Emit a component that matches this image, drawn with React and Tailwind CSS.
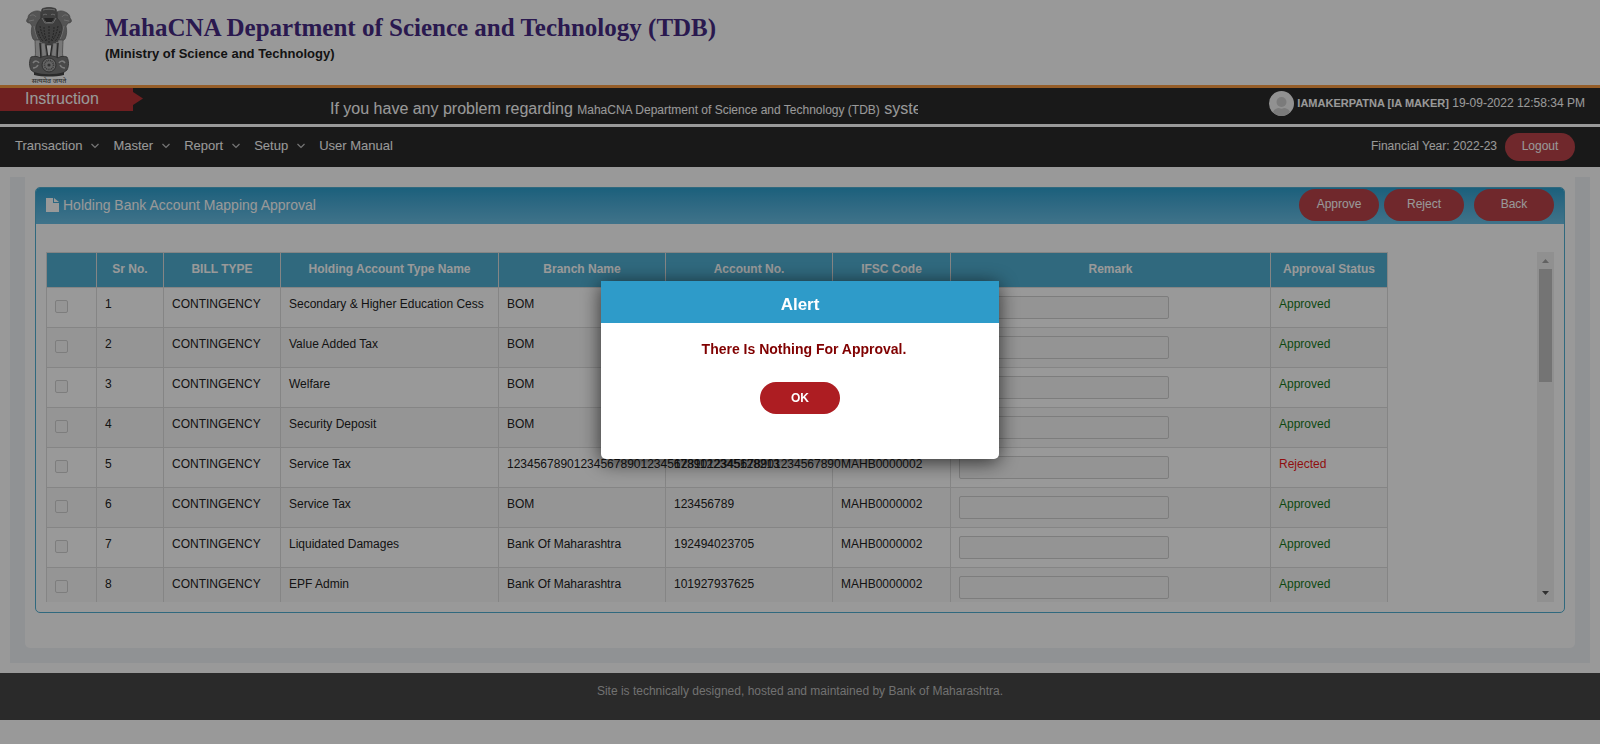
const FONT = "font-['Liberation_Sans',Arial,sans-serif]";

const menus = [
  { label: "Transaction", drop: true },
  { label: "Master", drop: true },
  { label: "Report", drop: true },
  { label: "Setup", drop: true },
  { label: "User Manual", drop: false },
];

const columns = [
  { label: "", width: "w-[50px]" },
  { label: "Sr No.", width: "w-[67px]" },
  { label: "BILL TYPE", width: "w-[117px]" },
  { label: "Holding Account Type Name", width: "w-[218px]" },
  { label: "Branch Name", width: "w-[167px]" },
  { label: "Account No.", width: "w-[167px]" },
  { label: "IFSC Code", width: "w-[118px]" },
  { label: "Remark", width: "w-[320px]" },
  { label: "Approval Status", width: "w-[117px]" },
];

const rows = [
  ["Secondary & Higher Education Cess", "BOM", "", "", "Approved"],
  ["Value Added Tax", "BOM", "", "", "Approved"],
  ["Welfare", "BOM", "", "", "Approved"],
  ["Security Deposit", "BOM", "", "", "Approved"],
  ["Service Tax", "12345678901234567890123456789012345678901234567890", "1231122345128213", "MAHB0000002", "Rejected"],
  ["Service Tax", "BOM", "123456789", "MAHB0000002", "Approved"],
  ["Liquidated Damages", "Bank Of Maharashtra", "192494023705", "MAHB0000002", "Approved"],
  ["EPF Admin", "Bank Of Maharashtra", "101927937625", "MAHB0000002", "Approved"],
];

function Emblem() {
  return (
    <svg viewBox="0 0 46 78" className="h-[78px] w-[46px]" role="img" aria-label="State emblem">
      {/* side lions */}
      <g fill="#8c8c8c" stroke="#5a5a5a" strokeWidth="0.6">
        <path d="M15 5C12 3 8 4 5 6 3 7 2 9 2 11c-1 1-2 3-1 4 1 1 2 1 3 1l2 3c-1 4-1 9 1 13 2 2 5 3 8 3z" />
        <path d="M31 5c3-2 7-1 10 1 2 1 3 3 3 5 1 1 2 3 1 4-1 1-2 1-3 1l-2 3c1 4 1 9-1 13-2 2-5 3-8 3z" />
      </g>
      {/* front lion and mane */}
      <path d="M16 2c3-2 11-2 14 0 1 3 1 6 1 9 4 4 6 9 5 15-1 5-5 9-9 12h-8c-4-3-8-7-9-12-1-6 1-11 5-15 0-3 0-6 1-9z" fill="#696969" stroke="#4c4c4c" strokeWidth="0.6" />
      <g fill="none" stroke="#bdbdbd" strokeWidth="0.9">
        <path d="M17 3c3-1 9-1 12 0M17 8c2-1 3-1 4 0M25 8c1-1 2-1 4 0M19 14c2 2 6 2 8 0M16 11l3 5h8l3-5" />
        <path d="M4 9c2-2 5-1 6 1M42 9c-2-2-5-1-6 1M3 14l5-1M43 14l-5-1M8 19c1 5 2 10 4 13M38 19c-1 5-2 10-4 13" />
      </g>
      <g fill="none" stroke="#3f3f3f" strokeWidth="1" strokeDasharray="2 1">
        <path d="M14 19c1 6 3 11 6 15M32 19c-1 6-3 11-6 15M18 20c0 5 1 10 3 14M28 20c0 5-1 10-3 14M23 19v17M12 24c1 4 2 7 5 10M34 24c-1 4-2 7-5 10" />
      </g>
      <path d="M18 11h10l-2 4h-6z" fill="#3d3d3d" />
      {/* legs */}
      <g fill="#c9c9c9" stroke="#6a6a6a" strokeWidth="0.7">
        <path d="M9 33h5l1 18H9c1-6 0-12 0-18zM15 36h4l2 16h-5zM27 36h4l-1 16h-5zM32 33h5c0 6-1 12 0 18h-6z" />
      </g>
      <path d="M14 36l1 15M20 38l2 14M26 38l-2 14M32 36l-1 15" fill="none" stroke="#444" strokeWidth="1.4" />
      {/* abacus */}
      <path d="M5 50c3-1 7-1 9 1 4-3 14-3 18 0 2-2 6-2 9-1 2 4 2 9 0 13-1 1-3 2-4 3v1c-8 2-20 2-28 0v-1c-1-1-3-2-4-3-2-4-2-9 0-13z" fill="#7b7b7b" stroke="#4a4a4a" strokeWidth="0.8" />
      <path d="M8 65c9 3 21 3 30 0v3c-9 2-21 2-30 0z" fill="#474747" />
      <g fill="none" stroke="#cfcfcf" strokeWidth="1.5">
        <path d="M7 56c2-3 5-2 6 0M7 61c2 0 4-1 5-3M39 56c-2-3-5-2-6 0M39 61c-2 0-4-1-5-3" />
      </g>
      <circle cx="23" cy="58" r="7" fill="#a7a7a7" stroke="#4f4f4f" />
      <circle cx="23" cy="58" r="4.5" fill="none" stroke="#606060" strokeWidth="1.6" strokeDasharray="1 0.8" />
      <circle cx="23" cy="58" r="1.6" fill="#555" />
      <text x="23" y="76" textAnchor="middle" fontSize="7" fontWeight="500" fill="#555" fontFamily="'Noto Sans','Noto Sans Devanagari',sans-serif">
        सत्यमेव जयते
      </text>
    </svg>
  );
}

function Chevron() {
  return (
    <svg viewBox="0 0 8 6" className="h-[6px] w-2" fill="none" stroke="#c4c4c4" strokeWidth="1.2" aria-hidden="true">
      <path d="M.5 1 4 4.500 7.500 1" />
    </svg>
  );
}

function Avatar() {
  return (
    <svg viewBox="0 0 25 25" className="size-[25px] shrink-0" aria-hidden="true">
      <circle cx="12.500" cy="12.500" r="12.500" fill="#f2f2f2" />
      <circle cx="12.500" cy="11" r="5" fill="#cdcdcd" />
      <path d="M4 21c1-3 4-4 6-4 2 1 3 1 5 0 2 0 5 1 6 4-2 2.500-5 4-8.500 4S6 23.500 4 21z" fill="#cdcdcd" />
    </svg>
  );
}

function FileIcon() {
  return (
    <svg viewBox="0 0 13 14" className="h-[14px] w-[13px]" fill="#fff" aria-hidden="true">
      <path d="M0 0h7v5h6v9H0z" />
      <path d="M8 0l5 4H8z" />
    </svg>
  );
}

function PillButton({ children }) {
  return (
    <button type="button" className="h-8 w-20 rounded-full bg-[#bb444a] pb-0.5 text-xs text-white">
      {children}
    </button>
  );
}

function Header() {
  return (
    <header>
      <div className="flex h-[85px] items-start gap-[33px] pl-[26px]">
        <div className="pt-[7px]">
          <Emblem />
        </div>
        <div className="pt-3">
          <h1 className="font-['Liberation_Serif','Times_New_Roman',serif] text-[25px] leading-8 font-bold text-[#462b84]">
            MahaCNA Department of Science and Technology (TDB)
          </h1>
          <p className="text-[13px] leading-5 font-bold text-[#222]">(Ministry of Science and Technology)</p>
        </div>
      </div>
      <div className="flex h-[39px] items-start border-t-3 border-[#f89b44] bg-[#2b2b2b] text-white">
        <div className="flex items-start">
          <span className="h-[23px] w-[133px] bg-[#b73537] pl-[25px] text-base leading-[22px]">Instruction</span>
          <svg viewBox="0 0 10 14" className="mt-1 h-[14px] w-[10px]" aria-hidden="true">
            <path d="M0 0 10 6.500 0 13z" fill="#b73537" />
          </svg>
        </div>
        <p className="ml-[187px] w-[588px] overflow-hidden pt-[9px] text-base leading-6 whitespace-nowrap">
          If you have any problem regarding{" "}
          <span className="text-xs">MahaCNA Department of Science and Technology (TDB)</span> system
        </p>
        <div className="ml-auto flex items-start gap-[3px] pt-[3px] pr-[15px] text-xs">
          <Avatar />
          <p className="leading-6 whitespace-nowrap">
            <b className="text-[11px]">IAMAKERPATNA [IA MAKER]</b> 19-09-2022 12:58:34 PM
          </p>
        </div>
      </div>
    </header>
  );
}

function Nav() {
  return (
    <nav className="mt-[3px] flex h-10 items-center justify-between bg-[#2b2b2b] pr-[25px] pl-[15px] text-white">
      <ul className="flex items-center gap-[14px] pb-[3px] text-[13px]">
        {menus.map((m) => (
          <li key={m.label}>
            <a href="#" className="flex items-center gap-[9px] whitespace-nowrap">
              {m.label}
              {m.drop && <Chevron />}
            </a>
          </li>
        ))}
      </ul>
      <div className="flex items-center gap-2 text-xs">
        <span className="pb-[3px]">Financial Year: 2022-23</span>
        <button type="button" className="h-7 w-[70px] rounded-full bg-[#bb444a] pb-[3px]">
          Logout
        </button>
      </div>
    </nav>
  );
}

function ScrollBar() {
  return (
    <div className="flex w-[17px] shrink-0 flex-col items-center bg-[#f1f1f1]" aria-hidden="true">
      <svg viewBox="0 0 17 17" className="size-[17px]">
        <path d="M5 11 8.500 7 12 11z" fill="#a3a3a3" />
      </svg>
      <div className="h-[113px] w-[13px] bg-[#c1c1c1]" />
      <svg viewBox="0 0 17 17" className="mt-auto size-[17px]">
        <path d="M5 6 8.500 10 12 6z" fill="#505050" />
      </svg>
    </div>
  );
}

function MappingTable() {
  return (
    <table className="w-[1342px] table-fixed border-collapse text-xs leading-4 text-[#222]">
      <thead>
        <tr className="h-[35px] bg-[#50afd2] text-white">
          {columns.map((c) => (
            <th key={c.label} scope="col" className={`border border-[#dedede] pb-0.5 font-bold ${c.width}`}>
              {c.label}
            </th>
          ))}
        </tr>
      </thead>
      <tbody>
        {rows.map(([type, branch, account, ifsc, status], i) => (
          <tr key={i} className="h-10 align-top odd:bg-white even:bg-[#f9f9f9]">
            <td className="border border-[#dedede] px-2 pt-3">
              <input
                type="checkbox"
                disabled
                aria-label={`Select row ${i + 1}`}
                className="block size-[13px] appearance-none rounded-xs border border-[#d1d1d1] bg-[#f9f9f9]"
              />
            </td>
            <td className="border border-[#dedede] px-2 pt-2">{i + 1}</td>
            <td className="border border-[#dedede] px-2 pt-2">CONTINGENCY</td>
            <td className="border border-[#dedede] px-2 pt-2 whitespace-nowrap">{type}</td>
            <td className="border border-[#dedede] px-2 pt-2 whitespace-nowrap">{branch}</td>
            <td className="border border-[#dedede] px-2 pt-2 whitespace-nowrap">{account}</td>
            <td className="border border-[#dedede] px-2 pt-2">{ifsc}</td>
            <td className="border border-[#dedede] px-2 pt-2">
              <input
                type="text"
                disabled
                aria-label={`Remark for row ${i + 1}`}
                className="block h-[23px] w-[210px] rounded-xs border border-[#d1d1d1] bg-[#f7f7f7] px-1"
              />
            </td>
            <td className={`border border-[#dedede] px-2 pt-2 ${status === "Rejected" ? "text-[#f01818]" : "text-[#17791c]"}`}>
              {status}
            </td>
          </tr>
        ))}
      </tbody>
    </table>
  );
}

function AlertDialog() {
  return (
    <div className="fixed inset-0 flex items-start justify-center bg-black/40 pt-[281px]">
      <div
        role="alertdialog"
        aria-labelledby="alert-title"
        aria-describedby="alert-text"
        className="flex h-[178px] w-[398px] flex-col items-center rounded-b-[5px] bg-white shadow-[0_3px_20px_rgba(0,0,0,0.7)]"
      >
        <h2 id="alert-title" className="w-full bg-[#2e9bc9] pt-1.5 text-center text-[17px] leading-9 font-bold text-white">
          Alert
        </h2>
        <p id="alert-text" className="mt-4 pl-2 text-sm leading-5 font-bold text-[#800000]">
          There Is Nothing For Approval.
        </p>
        <button type="button" className="mt-[23px] h-8 w-20 rounded-full bg-[#ad1d22] text-xs font-bold text-white">
          OK
        </button>
      </div>
    </div>
  );
}

export default function App() {
  return (
    <div className={`min-h-screen bg-white ${FONT}`}>
      <Header />
      <Nav />
      <main className="mx-[10px] mt-[10px] bg-[#f1f3f7] px-[15px] pb-[15px]">
        <div className="rounded-b-[5px] bg-white px-[10px] pt-[10px] pb-[35px]">
          <section className="overflow-hidden rounded-[5px] border border-[#50afd2]">
            <div className="flex h-9 items-start justify-between bg-linear-to-b from-[#2da0cf] to-[#6bc0e6] px-[10px] text-white">
              <h2 className="flex items-center gap-1 text-sm leading-[34px]">
                <FileIcon />
                Holding Bank Account Mapping Approval
              </h2>
              <div className="flex pt-px">
                <PillButton>Approve</PillButton>
                <div className="mr-[10px] ml-[5px]">
                  <PillButton>Reject</PillButton>
                </div>
                <PillButton>Back</PillButton>
              </div>
            </div>
            <div className="px-[10px] pt-7 pb-[10px]">
              <div className="flex h-[350px]">
                <div className="grow overflow-auto [scrollbar-width:none]">
                  <MappingTable />
                </div>
                <ScrollBar />
              </div>
            </div>
          </section>
        </div>
      </main>
      <footer className="mt-[10px] h-[47px] bg-[#464646] pt-[10px] text-center text-xs leading-4 text-[#bdbdbd]">
        Site is technically designed, hosted and maintained by Bank of Maharashtra.
      </footer>
      <AlertDialog />
    </div>
  );
}
